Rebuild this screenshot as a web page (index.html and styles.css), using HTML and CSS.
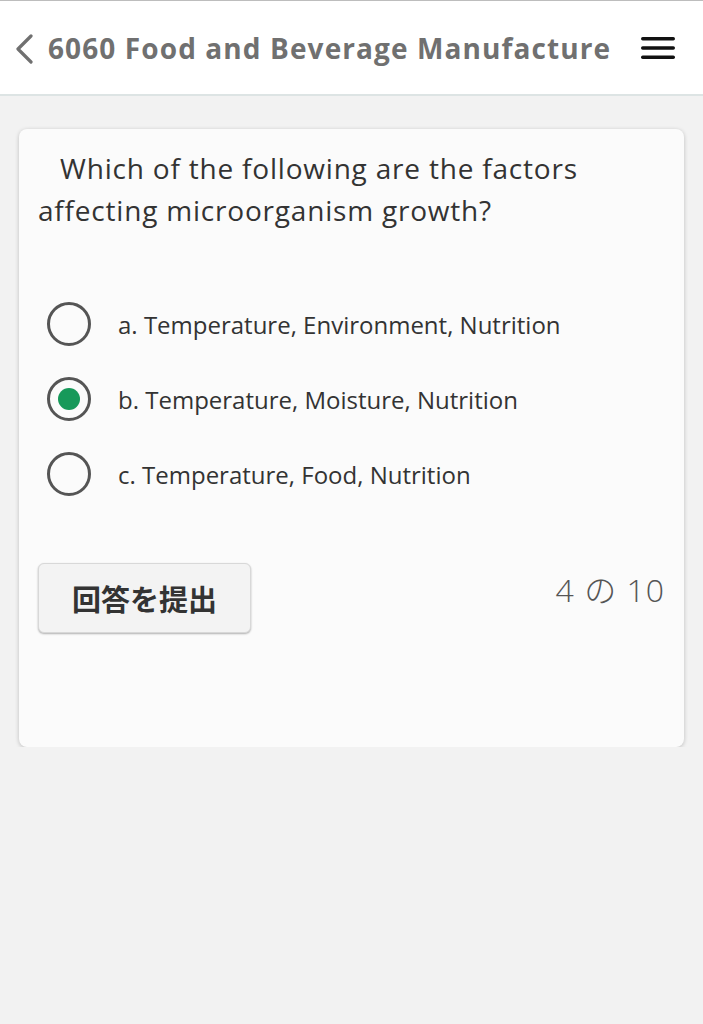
FILE: index.html
```html
<!DOCTYPE html>
<html lang="ja">
<head>
<meta charset="utf-8">
<title>Quiz</title>
<link rel="stylesheet" href="styles.css">
</head>
<body>
<header class="topbar">
  <div class="title-wrap">
    <svg class="back" width="20" height="30" viewBox="0 0 20 30"><path d="M17 2 L4 15 L17 28" fill="none" stroke="#707070" stroke-width="3.2" stroke-linecap="round" stroke-linejoin="round"/></svg>
    <h1 class="title">6060 Food and Beverage Manufacture</h1>
  </div>
  <svg class="menu" width="34" height="24" viewBox="0 0 34 24"><rect x="0" y="1" width="34" height="3.4" rx="1.7" fill="#111"/><rect x="0" y="10.3" width="34" height="3.4" rx="1.7" fill="#111"/><rect x="0" y="19.6" width="34" height="3.4" rx="1.7" fill="#111"/></svg>
</header>
<main class="page">
  <section class="card">
    <p class="question">Which of the following are the factors affecting microorganism growth?</p>
    <ul class="options">
      <li class="option"><span class="radio"></span><span class="label">a. Temperature, Environment, Nutrition</span></li>
      <li class="option"><span class="radio checked"></span><span class="label">b. Temperature, Moisture, Nutrition</span></li>
      <li class="option"><span class="radio"></span><span class="label">c. Temperature, Food, Nutrition</span></li>
    </ul>
    <div class="footer">
      <button class="submit">回答を提出</button>
      <span class="counter">4 の 10</span>
    </div>
  </section>
</main>
</body>
</html>
```
FILE: styles.css
```css
html, body {
  margin: 0;
  padding: 0;
  background: #f2f2f2;
  font-family: "Open Sans", "Noto Sans CJK JP", sans-serif;
}
.topbar {
  height: 93px;
  background: #fff;
  border-top: 1px solid #bdbdbd;
  border-bottom: 2px solid #dde4e4;
  display: flex;
  align-items: center;
  justify-content: space-between;
  padding: 0 28px 0 14px;
  box-sizing: content-box;
}
.title-wrap {
  display: flex;
  align-items: center;
  gap: 14px;
}
.back { display: block; margin-top: 2px; }
.title {
  margin: 0;
  font-size: 28px;
  font-weight: 700;
  color: #707070;
  letter-spacing: 1.1px;
  white-space: nowrap;
}
.menu { display: block; }
.page {
  padding: 33px 19px 0 19px;
}
.card {
  background: #fbfbfb;
  border-radius: 8px;
  box-shadow: 0 1px 4px rgba(0,0,0,0.22);
  padding: 18px 19px 0 19px;
  height: 618px;
  box-sizing: border-box;
}
.question {
  margin: 0;
  font-size: 28px;
  line-height: 42px;
  color: #333;
  text-indent: 22px;
  letter-spacing: 0.8px;
  font-weight: 400;
}
.options {
  list-style: none;
  margin: 71px 0 0 0;
  padding: 0;
  display: flex;
  flex-direction: column;
  gap: 31px;
}
.option {
  display: flex;
  align-items: center;
  gap: 27px;
  padding-left: 9px;
  height: 44px;
}
.radio {
  width: 38px;
  height: 38px;
  border: 3px solid #555;
  border-radius: 50%;
  display: flex;
  align-items: center;
  justify-content: center;
  flex: none;
}
.radio.checked::after {
  content: "";
  width: 22px;
  height: 22px;
  border-radius: 50%;
  background: #17995a;
}
.label {
  font-size: 24px;
  color: #333;
}
.footer {
  margin-top: 67px;
  display: flex;
  justify-content: space-between;
  align-items: flex-start;
}
.submit {
  width: 213px;
  height: 70px;
  background: #f3f3f3;
  border: 1px solid #d8d8d8;
  border-radius: 6px;
  box-shadow: 0 1px 2px rgba(0,0,0,0.3);
  font-family: "Noto Sans CJK JP", sans-serif;
  font-size: 29px;
  font-weight: 700;
  color: #333;
  padding: 0;
}
.counter {
  font-size: 32px;
  font-weight: 300;
  color: #555;
  letter-spacing: 1px;
  margin-top: 2px;
  margin-right: 0;
}
```
